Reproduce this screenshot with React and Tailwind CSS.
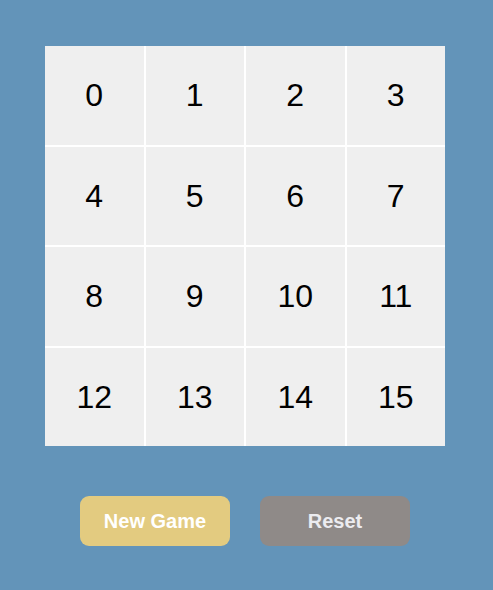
import { useState } from "react";

const start = Array.from({ length: 16 }, (_, i) => i);

function App() {
  const [tiles, setTiles] = useState(start);

  const shuffle = () => {
    const next = [...tiles];
    for (let i = next.length - 1; i > 0; i--) {
      const j = Math.floor(Math.random() * (i + 1));
      [next[i], next[j]] = [next[j], next[i]];
    }
    setTiles(next);
  };

  return (
    <div className="min-h-[590px] w-full bg-[#6394b9] pt-[46px] pl-[45px] font-['Liberation_Sans',Arial,sans-serif]">
      {/* board */}
      <div className="grid w-[400px] h-[400px] grid-cols-4 grid-rows-4 gap-[2px] bg-white">
        {tiles.map((n) => (
          <div
            key={n}
            className="flex items-center justify-center bg-[#efefef] text-[32px] text-black"
          >
            {n}
          </div>
        ))}
      </div>

      <div className="mt-[50px] flex gap-[30px] pl-[35px]">
        <button
          onClick={shuffle}
          className="h-[50px] w-[150px] rounded-[9px] bg-[#e3cb80] text-[20px] font-bold text-white"
        >
          New Game
        </button>
        <button
          onClick={() => setTiles(start)}
          className="h-[50px] w-[150px] rounded-[9px] bg-[#8f8a88] text-[20px] font-bold text-[#ececf0]"
        >
          Reset
        </button>
      </div>
    </div>
  );
}

export default App;
